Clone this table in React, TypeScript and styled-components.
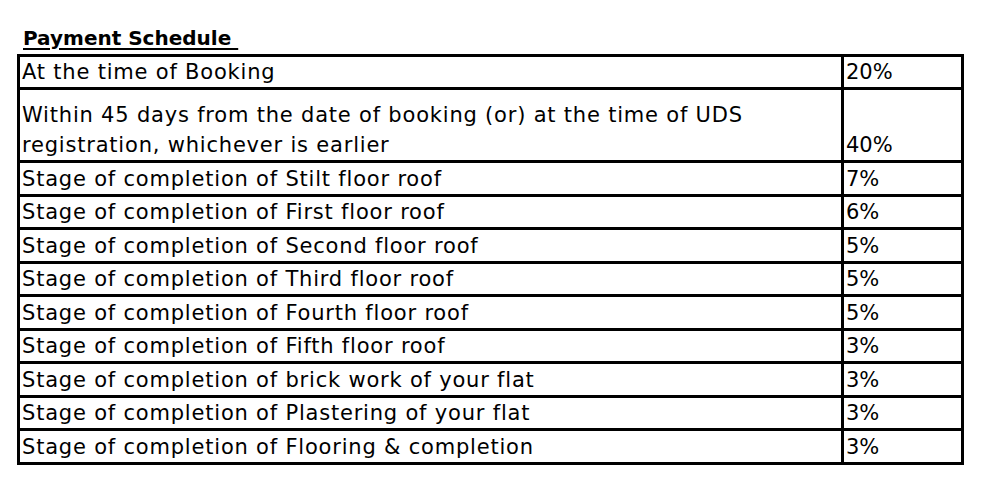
import React from 'react'
import styled, { createGlobalStyle } from 'styled-components'

const GlobalStyle = createGlobalStyle`
  html, body {
    margin: 0;
    padding: 0;
    background: #ffffff;
  }
  body {
    font-family: "DejaVu Sans", "Liberation Sans", sans-serif;
    color: #000000;
  }
`

const Page = styled.div`
  width: 984px;
  height: 485px;
  padding: 27px 0 0 17px;
  box-sizing: border-box;
`

const Heading = styled.div`
  font-weight: bold;
  font-size: 20px;
  line-height: 22px;
  padding-left: 6px;
  height: 27px;
  text-decoration: underline;
  text-decoration-thickness: 2px;
  text-underline-offset: 3px;
  white-space: pre;
`

const Table = styled.div`
  display: grid;
  grid-template-columns: 821px 117px;
  grid-template-rows: 30px 70px repeat(9, 30.5px);
  gap: 3px;
  width: 947px;
  border: 3px solid #000;
  background: #000;
  box-sizing: border-box;
`

const Cell = styled.div<{ $spacing: number }>`
  background: #fff;
  display: flex;
  align-items: flex-end;
  padding-left: 2px;
  font-size: 21px;
  line-height: 30px;
  letter-spacing: ${p => p.$spacing}px;
  white-space: pre-line;
  overflow: hidden;
`

const rows: [string, string][] = [
  ['At the time of Booking', '20%'],
  ['Within 45 days from the date of booking (or) at the time of UDS\nregistration, whichever is earlier', '40%'],
  ['Stage of completion of Stilt floor roof', '7%'],
  ['Stage of completion of First floor roof', '6%'],
  ['Stage of completion of Second floor roof', '5%'],
  ['Stage of completion of Third floor roof', '5%'],
  ['Stage of completion of Fourth floor roof', '5%'],
  ['Stage of completion of Fifth floor roof', '3%'],
  ['Stage of completion of brick work of your flat', '3%'],
  ['Stage of completion of Plastering of your flat', '3%'],
  ['Stage of completion of Flooring & completion', '3%'],
]

export default function App() {
  return (
    <Page>
      <GlobalStyle />
      <Heading>{'Payment Schedule '}</Heading>
      <Table>
        {rows.map(([stage, share]) => (
          <React.Fragment key={stage}>
            <Cell $spacing={0.8}>{stage}</Cell>
            <Cell $spacing={0}>{share}</Cell>
          </React.Fragment>
        ))}
      </Table>
    </Page>
  )
}
